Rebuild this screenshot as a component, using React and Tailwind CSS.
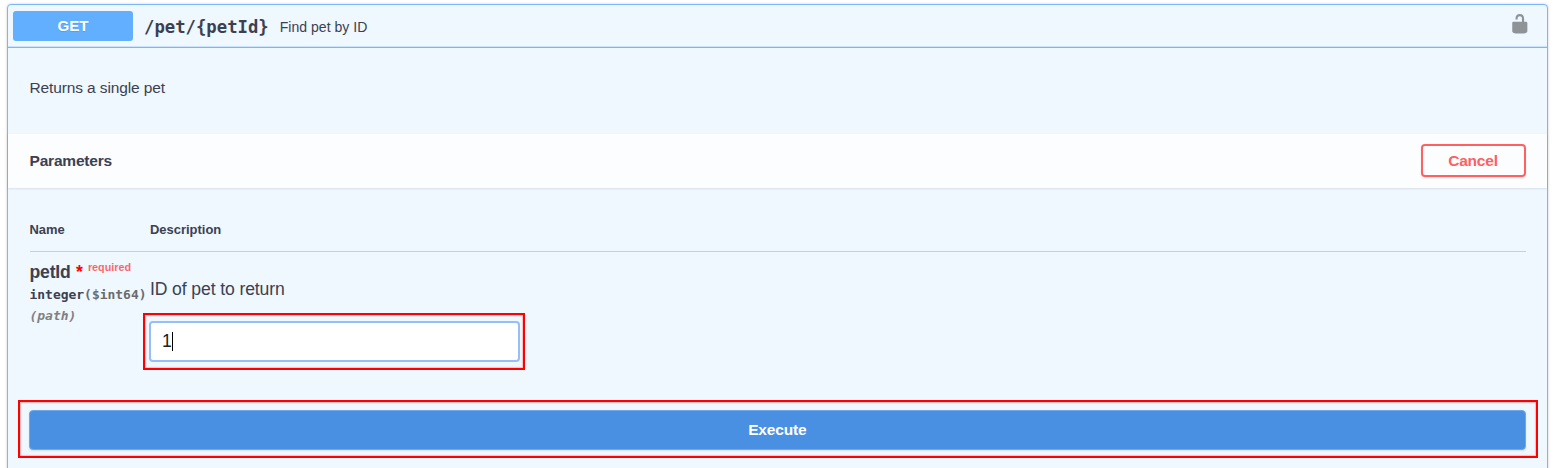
function UnlockIcon() {
  return (
    <svg viewBox="0 0 20 20" className="h-[21.6px] w-[21.6px] fill-black opacity-40" aria-hidden="true">
      <path d="M15.8 8H14V5.6C14 2.703 12.665 1 10 1 7.334 1 6 2.703 6 5.6V6h2v-.801C8 3.754 8.797 3 10 3c1.203 0 2 .754 2 2.199V8H4c-.553 0-1 .646-1 1.199V17c0 .549.428 1.139.951 1.307l1.197.387C5.672 18.861 6.55 19 7.1 19h5.8c.549 0 1.428-.139 1.951-.307l1.196-.387c.524-.167.953-.757.953-1.306V9.199C17 8.646 16.352 8 15.8 8z" />
    </svg>
  );
}

function Summary() {
  return (
    <div className="flex h-[43px] items-center border-b border-[#7ab6fb] pr-[16.5px] pl-[5px] shadow-[inset_0_-1px_0_#cbe4fe]">
      <div className="flex h-[30px] w-[120px] items-center justify-center rounded-[3px] bg-[#61affe] text-[15.12px] font-bold text-white [text-shadow:0_1px_0_rgba(0,0,0,0.1)]">
        GET
      </div>
      <div className="mt-[3px] ml-[11px] font-['DejaVu_Sans_Mono',monospace] text-[17.28px] font-bold">{'/pet/{petId}'}</div>
      <div className="mt-[3px] ml-[11px] text-[14.04px] tracking-[0.02px]">Find pet by ID</div>
      <div className="mb-[4px] ml-auto">
        <UnlockIcon />
      </div>
    </div>
  );
}

function ParameterTable() {
  return (
    <div className="px-[21.5px] pt-[32px]">
      <div className="flex h-[32px] border-b border-[#c5d0de] text-[12.96px] leading-[20px] font-bold">
        <div className="w-[120.5px]">Name</div>
        <div>Description</div>
      </div>
      <div className="flex h-[148px]">
        <div className="w-[120.5px] shrink-0 pt-[9px] whitespace-nowrap">
          <div className="flex text-[17.6px] leading-[22px] font-bold">
            <span className="tracking-[-0.2px]">petId</span>
            <span className="ml-[5.5px] text-[#ff0000]">*</span>
            <span className="ml-[5px] text-[10.8px] leading-[13px] text-[#ff0000]/60">required</span>
          </div>
          <div className="mt-[2px] font-['DejaVu_Sans_Mono',monospace] text-[12.96px] leading-[19px] font-bold">
            integer<span className="text-[#6b6b6b]">($int64)</span>
          </div>
          <div className="mt-[2px] font-['DejaVu_Sans_Mono',monospace] text-[12.96px] leading-[19px] font-bold text-[#808080] italic">
            (path)
          </div>
        </div>
        <div className="pt-[26px]">
          <div className="text-[17.6px] leading-[22px] tracking-[-0.12px]">ID of pet to return</div>
          <div className="mt-[13px] -ml-[7px] flex h-[57px] w-[382px] items-center border-2 border-[#ff0000] pr-[3px] pl-[4px] shadow-[inset_0_0_1px_1px_#ffb9bd]">
            <div className="flex h-[41px] w-full items-center rounded-[4px] border-2 border-[#96bff7] bg-white pl-[11px] text-[17.6px] text-[#202124]">
              1<span className="h-[19px] w-px bg-black" />
            </div>
          </div>
        </div>
      </div>
    </div>
  );
}

export default function App() {
  return (
    <div className="h-[468px] overflow-hidden bg-white pt-1 pr-[6px] pl-[7px] font-['Liberation_Sans',Arial,sans-serif] text-[#3b4151]">
      <div className="h-[520px] rounded-[4px] border border-[#7ab6fb] bg-[#eff7ff] shadow-[0_0_3px_rgba(0,0,0,0.19)]">
        <Summary />
        <div className="flex h-[86px] items-center px-[21.5px] pb-[7px] text-[15.5px] tracking-[-0.12px]">Returns a single pet</div>
        <div className="flex h-[54px] items-center justify-between bg-white/80 px-[21.5px] shadow-[0_1px_2px_rgba(0,0,0,0.1)]">
          <h4 className="text-[15.5px] font-bold tracking-[-0.19px]">Parameters</h4>
          <button className="mb-px h-[33px] w-[105px] rounded-[4px] border-2 border-[#ff6060] text-[15.5px] font-bold tracking-[-0.19px] text-[#ff6060] shadow-[0_1px_2px_rgba(0,0,0,0.1)]">
            Cancel
          </button>
        </div>
        <ParameterTable />
        <div className="mr-[9px] ml-[10px] flex h-[58px] items-center border-2 border-[#ff0000] pr-[10.5px] pl-[9px] shadow-[inset_0_0_1px_1px_#ffb9bd]">
          <button className="mt-px h-[40px] w-full rounded-[4px] border border-[#70a8ea] bg-[#4990e2] text-[15.5px] font-bold tracking-[-0.19px] text-white shadow-[0_1px_2px_rgba(0,0,0,0.1)]">
            Execute
          </button>
        </div>
      </div>
    </div>
  );
}
